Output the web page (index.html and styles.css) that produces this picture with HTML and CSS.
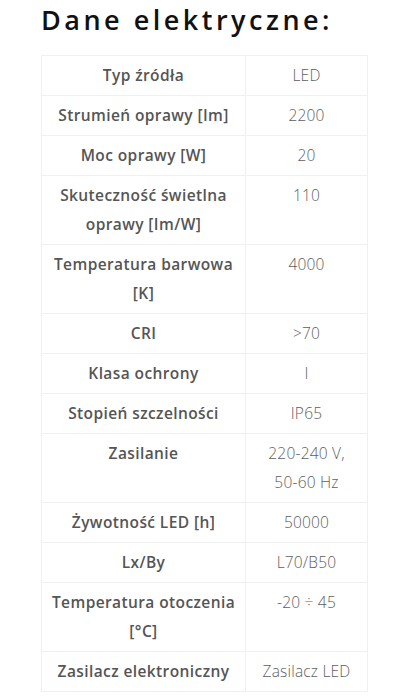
FILE: index.html
```html
<!DOCTYPE html>
<html lang="pl">
<head>
<meta charset="utf-8">
<title>Dane elektryczne</title>
<link rel="stylesheet" href="styles.css">
</head>
<body>
<main class="page">
  <h2 class="title">Dane elektryczne:</h2>
  <table class="specs">
    <tbody>
      <tr><th>Typ źródła</th><td>LED</td></tr>
      <tr><th>Strumień oprawy [Im]</th><td>2200</td></tr>
      <tr><th>Moc oprawy [W]</th><td>20</td></tr>
      <tr><th>Skuteczność świetlna oprawy [Im/W]</th><td>110</td></tr>
      <tr><th>Temperatura barwowa [K]</th><td>4000</td></tr>
      <tr><th>CRI</th><td>&gt;70</td></tr>
      <tr><th>Klasa ochrony</th><td>I</td></tr>
      <tr><th>Stopień szczelności</th><td>IP65</td></tr>
      <tr><th>Zasilanie</th><td><span class="nowrap">220-240 V,</span> <span class="nowrap">50-60 Hz</span></td></tr>
      <tr><th>Żywotność LED [h]</th><td>50000</td></tr>
      <tr><th>Lx/By</th><td>L70/B50</td></tr>
      <tr><th>Temperatura otoczenia [°C]</th><td>-20 ÷ 45</td></tr>
      <tr><th>Zasilacz elektroniczny</th><td>Zasilacz LED</td></tr>
    </tbody>
  </table>
</main>
</body>
</html>
```
FILE: styles.css
```css
html, body {
  margin: 0;
  padding: 0;
  background: #ffffff;
}
.page {
  padding: 0 37px 0 41px;
  font-family: "Open Sans", "Noto Sans", sans-serif;
}
.title {
  margin: 0;
  padding-top: 2px;
  font-size: 27px;
  line-height: 36px;
  font-weight: 600;
  letter-spacing: 3.5px;
  color: #111111;
  height: 55px;
  box-sizing: border-box;
}
.specs {
  width: 327px;
  border-collapse: collapse;
  table-layout: fixed;
  border: 1px solid #f0f0f0;
}
.specs th,
.specs td {
  border: 1px solid #f0f0f0;
  padding: 5px 6px;
  line-height: 29px;
  font-size: 15.5px;
  text-align: center;
  vertical-align: top;
}
.specs th {
  width: 191px;
  font-weight: 600;
  letter-spacing: 0.4px;
  color: #555555;
}
.specs td {
  font-weight: 300;
  letter-spacing: 0.2px;
  color: #5e5e5e;
}
.nowrap {
  white-space: nowrap;
}
```
